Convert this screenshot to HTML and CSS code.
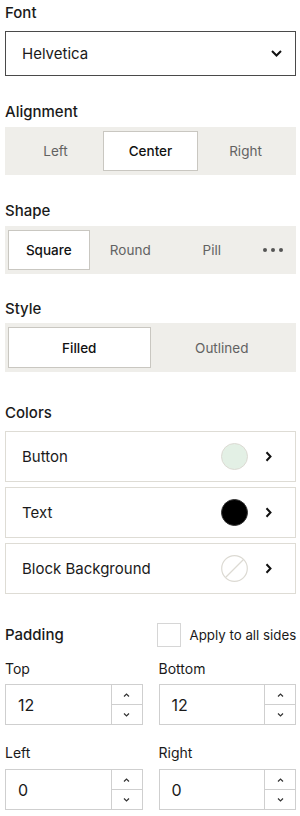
FILE: index.html
```html
<!DOCTYPE html>
<html>
<head>
<meta charset="utf-8">
<link rel="stylesheet" href="styles.css">
</head>
<body>
<div class="panel">
  <div class="label">Font</div>
  <div class="select">
    <span>Helvetica</span>
    <svg class="sel-chev" width="11" height="7" viewBox="0 0 11 7"><path d="M1 1l4.5 4.5L10 1" fill="none" stroke="#111" stroke-width="2"/></svg>
  </div>

  <div class="label l-align">Alignment</div>
  <div class="seg seg3">
    <div class="opt">Left</div>
    <div class="opt on">Center</div>
    <div class="opt">Right</div>
  </div>

  <div class="label l-shape">Shape</div>
  <div class="seg seg4">
    <div class="opt on">Square</div>
    <div class="opt">Round</div>
    <div class="opt">Pill</div>
    <div class="opt more"><span class="dot"></span><span class="dot"></span><span class="dot"></span></div>
  </div>

  <div class="label l-style">Style</div>
  <div class="seg seg2">
    <div class="opt on">Filled</div>
    <div class="opt">Outlined</div>
  </div>

  <div class="label l-colors">Colors</div>
  <div class="rows">
    <div class="row">
      <span class="row-text">Button</span>
      <span class="swatch sw-button"></span>
      <svg class="row-chev" width="7" height="11" viewBox="0 0 7 11"><path d="M1.5 1.2l4 4.3-4 4.3" fill="none" stroke="#111" stroke-width="2"/></svg>
    </div>
    <div class="row">
      <span class="row-text">Text</span>
      <span class="swatch sw-text"></span>
      <svg class="row-chev" width="7" height="11" viewBox="0 0 7 11"><path d="M1.5 1.2l4 4.3-4 4.3" fill="none" stroke="#111" stroke-width="2"/></svg>
    </div>
    <div class="row">
      <span class="row-text">Block Background</span>
      <svg class="swatch-svg" width="27" height="27" viewBox="0 0 27 27"><circle cx="13.5" cy="13.5" r="12.8" fill="#fff" stroke="#dcdad3" stroke-width="1.2"/><path d="M22.5 4.5L4.5 22.5" stroke="#dcdad3" stroke-width="1.2"/></svg>
      <svg class="row-chev" width="7" height="11" viewBox="0 0 7 11"><path d="M1.5 1.2l4 4.3-4 4.3" fill="none" stroke="#111" stroke-width="2"/></svg>
    </div>
  </div>

  <div class="pad-head">
    <div class="label">Padding</div>
    <label class="check"><span class="box"></span><span class="check-text">Apply to all sides</span></label>
  </div>

  <div class="grid">
    <div class="field">
      <div class="flabel">Top</div>
      <div class="num"><span class="val">12</span><div class="step"><span class="up"><svg width="7" height="4" viewBox="0 0 7 4"><path d="M1 3.5l2.5-2.5 2.5 2.5" fill="none" stroke="#333" stroke-width="1.2"/></svg></span><span class="down"><svg width="7" height="4" viewBox="0 0 7 4"><path d="M1 .5l2.5 2.5 2.5-2.5" fill="none" stroke="#333" stroke-width="1.2"/></svg></span></div></div>
    </div>
    <div class="field">
      <div class="flabel">Bottom</div>
      <div class="num"><span class="val">12</span><div class="step"><span class="up"><svg width="7" height="4" viewBox="0 0 7 4"><path d="M1 3.5l2.5-2.5 2.5 2.5" fill="none" stroke="#333" stroke-width="1.2"/></svg></span><span class="down"><svg width="7" height="4" viewBox="0 0 7 4"><path d="M1 .5l2.5 2.5 2.5-2.5" fill="none" stroke="#333" stroke-width="1.2"/></svg></span></div></div>
    </div>
    <div class="field f2">
      <div class="flabel">Left</div>
      <div class="num"><span class="val">0</span><div class="step"><span class="up"><svg width="7" height="4" viewBox="0 0 7 4"><path d="M1 3.5l2.5-2.5 2.5 2.5" fill="none" stroke="#333" stroke-width="1.2"/></svg></span><span class="down"><svg width="7" height="4" viewBox="0 0 7 4"><path d="M1 .5l2.5 2.5 2.5-2.5" fill="none" stroke="#333" stroke-width="1.2"/></svg></span></div></div>
    </div>
    <div class="field f2">
      <div class="flabel">Right</div>
      <div class="num"><span class="val">0</span><div class="step"><span class="up"><svg width="7" height="4" viewBox="0 0 7 4"><path d="M1 3.5l2.5-2.5 2.5 2.5" fill="none" stroke="#333" stroke-width="1.2"/></svg></span><span class="down"><svg width="7" height="4" viewBox="0 0 7 4"><path d="M1 .5l2.5 2.5 2.5-2.5" fill="none" stroke="#333" stroke-width="1.2"/></svg></span></div></div>
    </div>
  </div>
</div>
</body>
</html>
```

FILE: styles.css
```css
* { box-sizing: border-box; }
html, body { margin: 0; padding: 0; background: #fff; }
body {
  font-family: Inter, "Noto Sans", sans-serif;
  color: #1a1a1a;
  width: 300px;
}
.panel { padding: 3px 4px 0 5px; }

.label {
  font-size: 15px;
  line-height: 20px;
  font-weight: 500;
  color: #1a1a1a;
}
.select {
  margin-top: 8px;
  height: 45px;
  border: 1px solid #4a4a4a;
  display: flex;
  align-items: center;
  justify-content: space-between;
  padding: 0 13px 0 16px;
  font-size: 15px;
}
.l-align { margin-top: 26px; }
.l-shape { margin-top: 26px; }
.l-style { margin-top: 25px; }
.l-colors { margin-top: 31px; }

.seg {
  margin-top: 5px;
  height: 48px;
  background: #efeeea;
  padding: 4px 3px;
  display: grid;
}
.l-style + .seg { margin-top: 4px; height: 49px; }
.seg3 { grid-template-columns: repeat(3, minmax(0, 1fr)); }
.seg2 { grid-template-columns: repeat(2, minmax(0, 1fr)); }
.seg4 { grid-template-columns: 81.5px 81.5px 81.5px minmax(0, 1fr); }
.opt {
  display: flex;
  align-items: center;
  justify-content: center;
  font-size: 13.5px;
  color: #626262;
}
.opt.on {
  background: #fff;
  border: 1px solid #c9c7c1;
  color: #111;
  font-weight: 500;
}
.more { gap: 4px; }
.dot { width: 4px; height: 4px; border-radius: 50%; background: #555; }

.rows {
  margin-top: 8px;
  display: flex;
  flex-direction: column;
  gap: 5px;
}
.row {
  height: 51px;
  border: 1px solid #dedcd5;
  display: flex;
  align-items: center;
  padding: 0 23px 0 16px;
  font-size: 15px;
}
.row-text { flex: 1; }
.swatch {
  width: 27px;
  height: 27px;
  border-radius: 50%;
  border: 1px solid #dcdad3;
}
.sw-button { background: #e3f0e5; }
.sw-text { background: #000; border-color: #333; }
.row-chev { margin-left: 17px; }
.swatch-svg { display: block; }

.pad-head {
  margin-top: 29px;
  display: grid;
  grid-template-columns: repeat(2, minmax(0, 1fr));
  column-gap: 16px;
  align-items: center;
  height: 24px;
}
.check { display: flex; align-items: center; margin-left: -2px; }
.box { flex: none; width: 24px; height: 24px; border: 1px solid #d6d6d6; background: #fff; }
.check-text { margin-left: 9px; font-size: 13.3px; color: #1a1a1a; white-space: nowrap; }

.grid {
  margin-top: 13px;
  display: grid;
  grid-template-columns: repeat(2, minmax(0, 1fr));
  column-gap: 16px;
}
.f2 { margin-top: 19px; }
.flabel { font-size: 14px; line-height: 18px; color: #1a1a1a; }
.num {
  margin-top: 6px;
  height: 41px;
  border: 1px solid #cfcfcf;
  display: flex;
}
.f2 .num { margin-top: 7px; }
.val {
  flex: 1;
  display: flex;
  align-items: center;
  padding-left: 12px;
  font-size: 16px;
}
.step {
  width: 31px;
  border-left: 1px solid #cfcfcf;
  display: flex;
  flex-direction: column;
}
.step span { flex: 1; display: flex; align-items: center; justify-content: center; }
.step svg { display: block; }
.up { border-bottom: 1px solid #cfcfcf; }
```
